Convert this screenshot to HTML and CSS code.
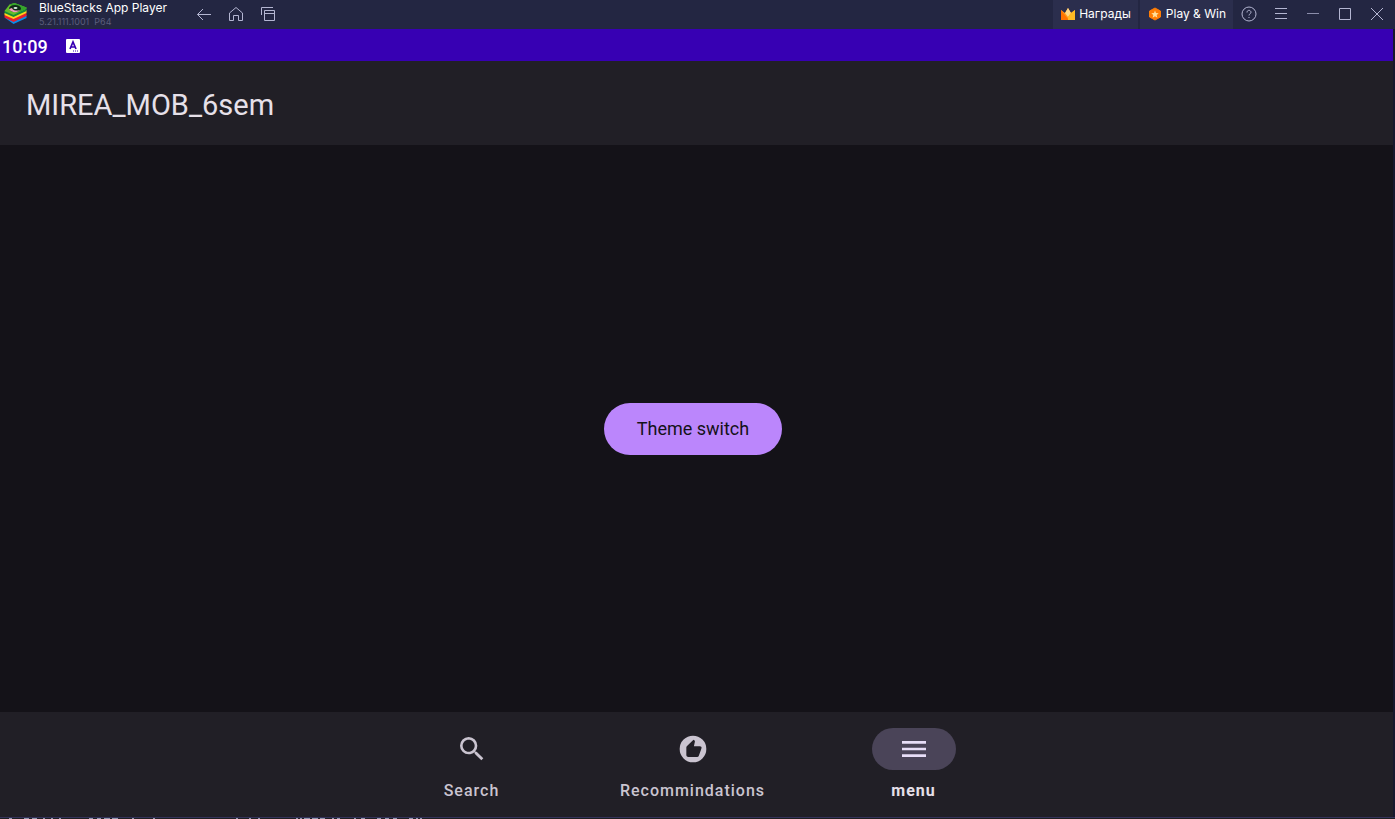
FILE: index.html
```html
<!DOCTYPE html>
<html lang="en">
<head>
<meta charset="utf-8">
<title>BlueStacks App Player</title>
<link rel="stylesheet" href="styles.css">
</head>
<body>
<header class="titlebar">
  <svg class="logo" viewBox="0 0 24 24" aria-hidden="true">
    <path d="M1 15.500l9 6.500 13-6v-3l-12 5z" fill="#0a8ce8"/>
    <path d="M1 13v2.500l9 4.500 13-6v-3z" fill="#e8202c"/>
    <path d="M1 11v2l9 4 13-6V8z" fill="#ffd21c"/>
    <path d="M1 9v2l9 4 13-6V6.500z" fill="#168a36"/>
    <path d="M1 9l5-6.500L11 1l12 4.500v1L10 13z" fill="#64bd2a"/>
    <path d="M6 2.500L11 1l12 4.500v1l-6 3z" fill="#35a52c"/>
    <ellipse cx="11.500" cy="6.500" rx="6" ry="3.500" fill="#102a18"/>
    <path d="M5.500 7c2 4 9 4 11 1-3 1-7 1-8-2z" fill="#f09cbc"/>
    <ellipse cx="12" cy="6" rx="2" ry="1" fill="#d8eee0"/>
  </svg>
  <div class="app-id">
    <span class="app-name">BlueStacks App Player</span>
    <span class="app-version">5.21.111.1001&nbsp; P64</span>
  </div>
  <div class="nav-tools">
    <button class="tool" aria-label="Back"><svg viewBox="0 0 16 16"><path d="M15 8.500H1.500M7 3L1.500 8.500 7 14"/></svg></button>
    <button class="tool" aria-label="Home"><svg viewBox="0 0 16 16"><path d="M1.500 7L8 1.500 14.500 7v7.500h-4v-5h-5v5h-4z"/></svg></button>
    <button class="tool" aria-label="Recent apps"><svg viewBox="0 0 16 16"><path d="M1.500 9V1.500H13M4.500 4.500h10v10h-10zM4.500 7.500h10"/></svg></button>
  </div>
  <div class="promos">
    <button class="promo">
      <svg viewBox="0 0 16 16" aria-hidden="true"><path d="M1 4l4 3 3-5 3 5 4-3v10H1z" fill="#ff9b1a"/><path d="M1 4l7 9v1H1z" fill="#ff7300"/><path d="M8 2l3 5-3 4-3-4z" fill="#ffd887"/><path d="M15 4v10H8v-3l3-4z" fill="#ffba24"/></svg>
      Награды
    </button>
    <button class="promo">
      <svg viewBox="0 0 16 16" aria-hidden="true"><path d="M8 2l5.500 3v6L8 14l-5.500-3V5z" fill="#ff7d05" stroke="#ff7d05" stroke-linejoin="round"/><path d="M8 4.500l1 2.500 2.700.200-2 1.800.7 2.700L8 10.200l-2.400 1.500.7-2.700-2-1.800L7 7z" fill="#ffdf9b"/></svg>
      Play &amp; Win
    </button>
  </div>
  <div class="window-tools">
    <button class="tool" aria-label="Help"><svg viewBox="0 0 16 16"><circle cx="8" cy="8" r="7"/><path d="M6 6.500C6 3.500 10 3.800 10 6.300 10 7.800 8 7.800 8 9.500M8 11v1"/></svg></button>
    <button class="tool" aria-label="Menu"><svg viewBox="0 0 16 16"><path d="M2 2.500h12M2 7.500h12M2 12.500h12"/></svg></button>
    <button class="tool minimize" aria-label="Minimize"><svg viewBox="0 0 16 16"><path d="M2 7.500h12"/></svg></button>
    <button class="tool" aria-label="Maximize"><svg viewBox="0 0 16 16"><path d="M2.500 2.500h11v11h-11z"/></svg></button>
    <button class="tool" aria-label="Close"><svg viewBox="0 0 16 16"><path d="M2 2l12 12M14 2L2 14"/></svg></button>
  </div>
</header>
<div class="device">
  <div class="statusbar">
    <span>10:09</span>
    <svg viewBox="0 0 14 14" aria-hidden="true"><rect width="14" height="14" rx="1" fill="#fff"/><path d="M4 10l3-7 3 7M5 8h4" fill="none" stroke="#3700b3" stroke-width="1.700"/><path d="M7 12h1M9 12h1M11 12h1" stroke="#3700b3"/></svg>
  </div>
  <div class="appbar"><h1>MIREA_MOB_6sem</h1></div>
  <main class="content"><button class="theme-button">Theme switch</button></main>
  <nav class="bottom-nav">
    <button class="nav-item">
      <span class="indicator"><svg viewBox="0 0 24 24"><path d="M15.500 14h-.79l-.28-.27A6.470 6.470 0 0 0 16 9.500 6.500 6.500 0 1 0 9.500 16c1.610 0 3.090-.59 4.230-1.570l.27.28v.79l5 4.990L20.490 19l-4.990-5zm-6 0C7.010 14 5 11.990 5 9.500S7.010 5 9.500 5 14 7.010 14 9.500 11.990 14 9.500 14z"/></svg></span>
      Search
    </button>
    <button class="nav-item">
      <span class="indicator"><svg viewBox="0 0 24 24"><path fill-rule="evenodd" d="M12 2a10 10 0 1 0 0 20 10 10 0 0 0 0-20zM18 12.500l-1.700 4.700c-.2.500-.6.800-1.200.8H8.500C7.700 18 7 17.300 7 16.500v-5.700c0-.4.200-.8.500-1.100L12.400 5l.8.700c.2.300.3.500.2.800L12.700 10h4.500c.8 0 1.400.6 1.200 1.300z"/></svg></span>
      Recommindations
    </button>
    <button class="nav-item active" aria-current="page">
      <span class="indicator"><svg viewBox="0 0 24 24"><path d="M3 18h18v-2H3v2zm0-5h18v-2H3v2zm0-7v2h18V6H3z"/></svg></span>
      menu
    </button>
  </nav>
</div>
<footer class="underlay">
  <svg viewBox="0 0 440 1" aria-hidden="true"><path d="M9 .5h3M24 .5h5M32 .5h5M43 .5h2M51 .5h2M59 .5h2M89 .5h4M97 .5h4M104 .5h6M112 .5h6M132 .5h2M153 .5h2M236 .5h2M249 .5h2M258 .5h2M296 .5h2M300 .5h2M304 .5h6M312 .5h6M320 .5h5M332 .5h2M337 .5h3M354 .5h2M361 .5h4M377 .5h4M385 .5h4M393 .5h4M409 .5h4M416 .5h2M420 .5h2"/></svg>
</footer>
</body>
</html>
```

FILE: styles.css
```css
* { box-sizing: border-box; }

body {
  margin: 0;
  min-height: 100vh;
  display: flex;
  flex-direction: column;
  overflow: hidden;
  background: #141218;
  font-family: Roboto, "Liberation Sans", sans-serif;
}

button {
  margin: 0;
  padding: 0;
  border: 0;
  background: none;
  color: inherit;
  font: inherit;
}

.titlebar {
  display: flex;
  height: 29px;
  padding-left: 3px;
  background: #232642;
  color: #fff;
  font-family: Inter, Roboto, sans-serif;
}

.logo { width: 25px; height: 24px; margin-top: 2px; }

.app-id {
  display: flex;
  flex-direction: column;
  width: 149px;
  margin-left: 11px;
  white-space: nowrap;
}

.app-name { font-size: 12px; line-height: 16px; }
.app-version { font-size: 9px; line-height: 11px; color: #5c5f7c; }

.nav-tools, .window-tools, .promos { display: flex; }

.tool {
  display: flex;
  align-items: center;
  justify-content: center;
  width: 32px;
  padding-bottom: 2px;
}

.tool svg {
  width: 16px;
  height: 16px;
  fill: none;
  stroke: #b4b6d2;
  stroke-width: 1;
}

.minimize svg { stroke: #8b8dab; }

.promos { gap: 2px; margin-left: auto; }

.promo {
  display: flex;
  align-items: center;
  gap: 3px;
  padding: 0 7px 2px;
  background: #2b2e4d;
  font-size: 12px;
  white-space: nowrap;
}

.promo svg { width: 16px; height: 16px; }

.window-tools { padding-right: 2px; }

.device {
  flex: 1;
  display: flex;
  flex-direction: column;
  border-right: 2px solid #17182d;
}

.statusbar {
  display: flex;
  align-items: center;
  gap: 18px;
  height: 32px;
  padding: 2px 2px 0;
  background: #3700b3;
  color: #fff;
  font-size: 18px;
  font-weight: 500;
}

.statusbar svg { width: 14px; height: 14px; }

.appbar {
  display: flex;
  align-items: center;
  height: 84px;
  padding: 4px 26px 0;
  background: #211f26;
}

.appbar h1 {
  margin: 0;
  color: #e6e0e9;
  font-size: 29px;
  font-weight: 400;
}

.content {
  flex: 1;
  display: flex;
  align-items: center;
  justify-content: center;
  padding-right: 7px;
}

.theme-button {
  padding: 15px 33px;
  border-radius: 27px;
  background: #bb86fc;
  color: #141218;
  font-size: 18px;
  line-height: 22px;
}

.bottom-nav {
  display: flex;
  justify-content: center;
  padding: 16px 8px 16px 0;
  background: #211f26;
}

.nav-item {
  display: flex;
  flex-direction: column;
  align-items: center;
  gap: 10px;
  width: 221px;
  color: #cac4d0;
  font-size: 16px;
  font-weight: 500;
  line-height: 21px;
  letter-spacing: 1px;
}

.indicator {
  display: flex;
  align-items: center;
  justify-content: center;
  width: 84px;
  height: 42px;
  border-radius: 21px;
}

.indicator svg { width: 32px; height: 32px; fill: currentColor; }

.active { color: #e6e0e9; font-weight: 700; }
.active .indicator { background: #4a4458; color: #e8def8; }

.underlay {
  height: 2px;
  border-top: 1px solid #34335b;
  background: #1e1f22;
}

.underlay svg {
  display: block;
  width: 440px;
  height: 1px;
  fill: none;
  stroke: #9299ad;
}
```
